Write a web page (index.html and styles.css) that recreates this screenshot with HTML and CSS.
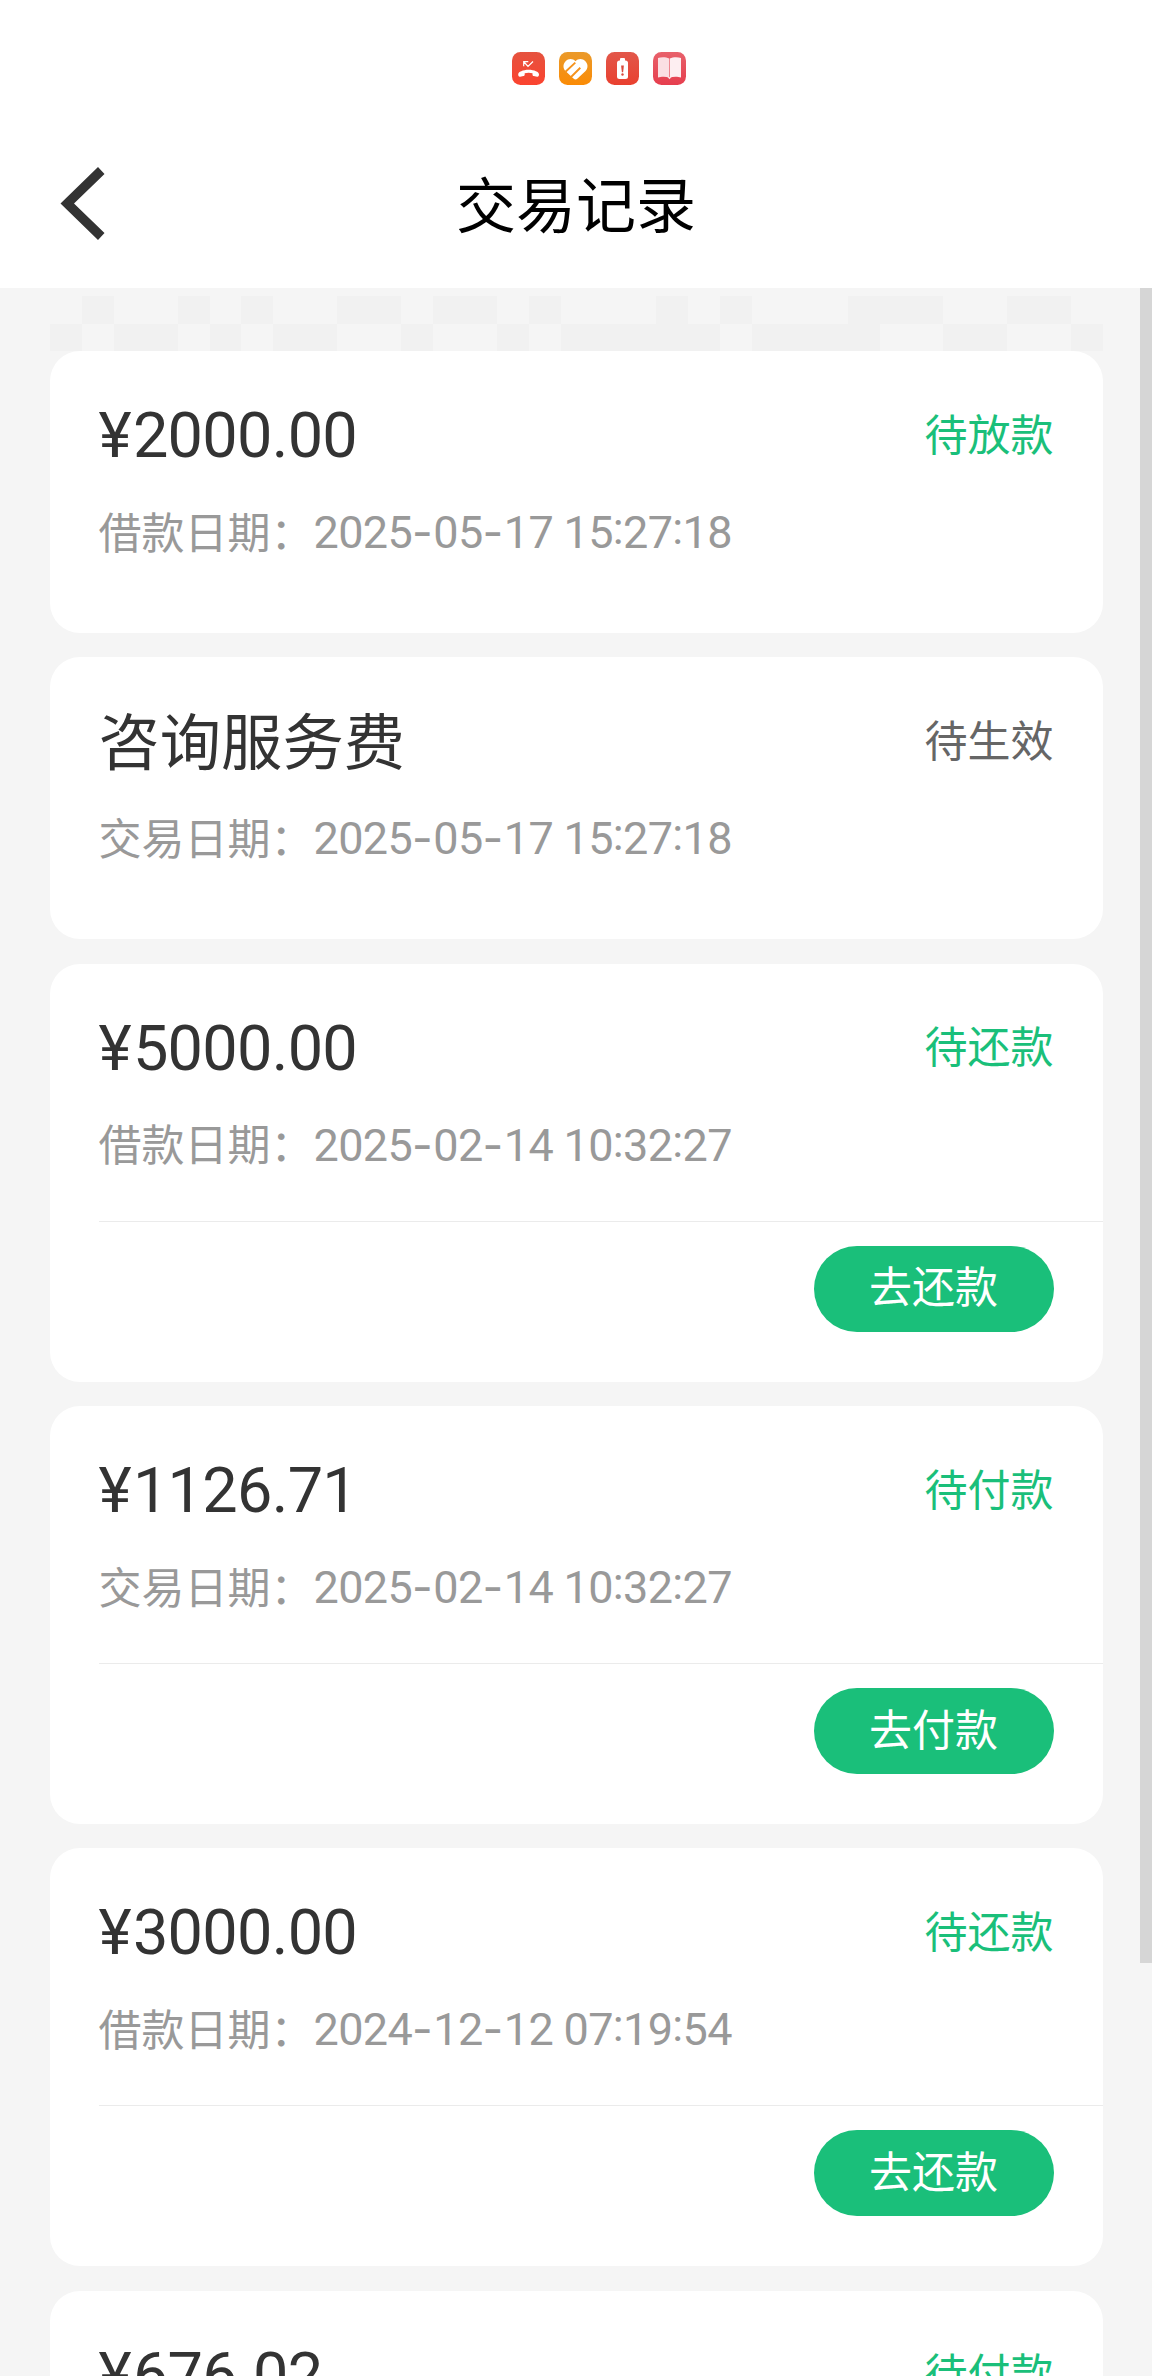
FILE: index.html
```html
<!DOCTYPE html>
<html lang="zh-CN">
<head>
<meta charset="utf-8">
<title>交易记录</title>
<link rel="stylesheet" href="styles.css">
</head>
<body>
<div class="screen">
  <div class="status-bar">
    <svg class="app-icon" viewBox="0 0 33 33">
      <defs><linearGradient id="g1" x1="0" y1="0" x2="0" y2="1"><stop offset="0" stop-color="#e5533f"/><stop offset="1" stop-color="#fb432f"/></linearGradient></defs>
      <rect width="33" height="33" rx="8.5" fill="url(#g1)"/>
      <path d="M6.200 22.300c0-2.400 4.800-4.600 10.400-4.600s10.400 2.200 10.400 4.600c0 1.800-.6 2.600-1.900 2.400l-3.300-.6c-1-.2-1.300-.8-1.300-1.600v-1.200c-2.400-.7-5.400-.7-7.800 0v1.200c0 .8-.3 1.400-1.300 1.600l-3.300.6c-1.300.2-1.900-.6-1.900-2.400z" fill="#fff"/>
      <path d="M11.700 14.200V9.600h4.600M12 10l4 4.500 5-5" fill="none" stroke="#fff" stroke-width="1.200"/>
    </svg>
    <svg class="app-icon" viewBox="0 0 33 33">
      <defs><linearGradient id="g2" x1="0" y1="0" x2="0" y2="1"><stop offset="0" stop-color="#ea9a2b"/><stop offset="1" stop-color="#fb8b05"/></linearGradient></defs>
      <rect width="33" height="33" rx="8.5" fill="url(#g2)"/>
      <path d="M16.500 9.300C14 6.500 9.500 6.300 6.600 9.200c-2.900 3-2.700 7.200.1 10l7.800 7.400c1.300 1.200 2.700 1.200 4 0l7.800-7.400c2.800-2.800 3-7 .1-10-2.900-2.900-7.400-2.700-9.900.1z" fill="#fff"/>
      <path d="M6.500 19.700L16.300 10.600M11.800 25.200L21.300 15.800" stroke="#f5921c" stroke-width="1.900" fill="none"/>
    </svg>
    <svg class="app-icon" viewBox="0 0 33 33">
      <defs><linearGradient id="g3" x1="0" y1="0" x2="0" y2="1"><stop offset="0" stop-color="#e2574a"/><stop offset="1" stop-color="#e9402f"/></linearGradient></defs>
      <rect width="33" height="33" rx="8.5" fill="url(#g3)"/>
      <rect x="14" y="6" width="5" height="4" rx="1" fill="#fff"/>
      <rect x="11" y="8.5" width="11" height="18.5" rx="2.5" fill="#fff"/>
      <path d="M15.100 13.500h2.800l-.8 6.700h-1.200z" fill="#d9493c"/>
      <circle cx="16.5" cy="22.5" r="1.2" fill="#d9493c"/>
    </svg>
    <svg class="app-icon" viewBox="0 0 33 33">
      <defs><linearGradient id="g4" x1="0" y1="0" x2="0" y2="1"><stop offset="0" stop-color="#e8616b"/><stop offset="1" stop-color="#e63e4e"/></linearGradient></defs>
      <rect width="33" height="33" rx="8.5" fill="url(#g4)"/>
      <path d="M5 6c3-1.200 8-1.200 11.200.5v19c-3.200-1-8.200-1-11.200 0z" fill="#fbdfe3"/>
      <path d="M28 6c-3-1.200-8-1.200-11.200.5v19c3.200-1 8.200-1 11.200 0z" fill="#fdeef1"/>
      <path d="M14.500 25h4l-2 2.300z" fill="#fbdfe3"/>
    </svg>
  </div>

  <header class="nav">
    <svg class="back" viewBox="0 0 44 73"><path d="M37.500 0L44 7 13.500 36.500 44 66l-6.500 7L0 36.500z" fill="#333"/></svg>
    <h1 class="nav-title">交易记录</h1>
  </header>

  <main class="content">
    <svg class="mosaic" viewBox="0 0 33 2" preserveAspectRatio="none" shape-rendering="crispEdges">
      <path d="M1 0h1v1h-1zM4 0h1v1h-1zM6 0h1v1h-1zM9 0h2v1h-2zM12 0h2v1h-2zM15 0h1v1h-1zM19 0h1v1h-1zM21 0h1v1h-1zM25 0h3v1h-3zM30 0h2v1h-2zM0 1h1v1h-1zM2 1h2v1h-2zM5 1h1v1h-1zM7 1h2v1h-2zM11 1h1v1h-1zM14 1h1v1h-1zM16 1h5v1h-5zM22 1h4v1h-4zM28 1h2v1h-2zM32 1h1v1h-1z" fill="#f1f1f1"/>
    </svg>
    <div class="list">
      <section class="card">
        <div class="head"><span class="amount"><span class="yen">¥</span>2000.00</span><span class="state">待放款</span></div>
        <div class="date"><span class="label">借款日期：</span><span class="time">2025<i>-</i>05<i>-</i>17 15<b>:</b>27<b>:</b>18</span></div>
      </section>
      <section class="card">
        <div class="head"><span class="name">咨询服务费</span><span class="state muted">待生效</span></div>
        <div class="date"><span class="label">交易日期：</span><span class="time">2025<i>-</i>05<i>-</i>17 15<b>:</b>27<b>:</b>18</span></div>
      </section>
      <section class="card tall">
        <div class="head"><span class="amount"><span class="yen">¥</span>5000.00</span><span class="state">待还款</span></div>
        <div class="date"><span class="label">借款日期：</span><span class="time">2025<i>-</i>02<i>-</i>14 10<b>:</b>32<b>:</b>27</span></div>
        <div class="foot"><button class="pay">去还款</button></div>
      </section>
      <section class="card tall">
        <div class="head"><span class="amount"><span class="yen">¥</span>1126.71</span><span class="state">待付款</span></div>
        <div class="date"><span class="label">交易日期：</span><span class="time">2025<i>-</i>02<i>-</i>14 10<b>:</b>32<b>:</b>27</span></div>
        <div class="foot"><button class="pay">去付款</button></div>
      </section>
      <section class="card tall">
        <div class="head"><span class="amount"><span class="yen">¥</span>3000.00</span><span class="state">待还款</span></div>
        <div class="date"><span class="label">借款日期：</span><span class="time">2024<i>-</i>12<i>-</i>12 07<b>:</b>19<b>:</b>54</span></div>
        <div class="foot"><button class="pay">去还款</button></div>
      </section>
      <section class="card tall">
        <div class="head"><span class="amount"><span class="yen">¥</span>676.02</span><span class="state">待付款</span></div>
      </section>
    </div>
    <div class="scrollbar"></div>
  </main>
</div>
</body>
</html>
```
FILE: styles.css
```css
* { box-sizing: border-box; }

body {
  margin: 0;
  background: #f5f5f5;
  font-family: "Noto Sans CJK SC", sans-serif;
  color: #333;
}

.screen {
  height: 2376px;
  overflow: hidden;
  display: flex;
  flex-direction: column;
}

.status-bar {
  flex: none;
  height: 120px;
  padding: 52px 0 0 512px;
  background: #fff;
  display: flex;
  gap: 14px;
}

.app-icon { width: 33px; height: 33px; display: block; }

.nav {
  flex: none;
  height: 168px;
  padding: 0 60px 2px;
  background: #fff;
  display: grid;
  grid-template-columns: 45px 1fr 45px;
  align-items: center;
}

.back { width: 45px; height: 73px; display: block; }

.nav-title {
  margin: 0;
  padding-bottom: 2px;
  text-align: center;
  font-size: 60px;
  line-height: 80px;
  font-weight: 400;
  color: #000;
}

.content {
  position: relative;
  flex: 1;
  min-height: 0;
  padding: 8px 49px 0 49.5px;
}

.mosaic { display: block; width: 1053px; height: 55px; }

.list { display: flex; flex-direction: column; gap: 24.4px; }

.card {
  flex: none;
  height: 282px;
  width: 1053px;
  padding: 49px 49px 0;
  background: #fff;
  border-radius: 30px;
}

.card.tall { height: 417.9px; }

.head {
  height: 70px;
  display: flex;
  align-items: center;
  justify-content: space-between;
}

.amount, .time { font-family: Roboto, sans-serif; }

.amount { padding-top: 2px; font-size: 63px; letter-spacing: -0.7px; line-height: 70px; }
.yen { margin-right: 2px; }

.time { padding-bottom: 1px; font-size: 45px; line-height: 60px; letter-spacing: -0.65px; }
.time i { font-family: Inter, sans-serif; font-style: normal; letter-spacing: 0.5px; }
.time b { font-weight: 400; vertical-align: 4px; line-height: 1; }

.name { padding-bottom: 5px; font-size: 61.3px; line-height: 70px; }

.state { padding-bottom: 7px; font-size: 43px; line-height: 60px; color: #1abf7a; }
.state.muted { color: #666; }

.date {
  height: 60px;
  margin-top: 33px;
  display: flex;
  align-items: center;
  font-size: 43px;
  line-height: 60px;
  color: #999;
  white-space: nowrap;
}

.label { padding-bottom: 7px; }

.foot {
  margin: 45px -49px 0 0;
  padding: 24px 49px 0 0;
  border-top: 1px solid #ebebeb;
  display: flex;
  justify-content: flex-end;
}

.pay {
  width: 240px;
  height: 86px;
  padding: 0 0 9px;
  border: 0;
  border-radius: 43px;
  background: #1abf7a;
  color: #fff;
  font: 400 43px/60px "Noto Sans CJK SC", sans-serif;
}

.scrollbar {
  position: absolute;
  top: 0;
  right: 0;
  width: 12px;
  height: 1675px;
  background: #d6d6d6;
}
```
